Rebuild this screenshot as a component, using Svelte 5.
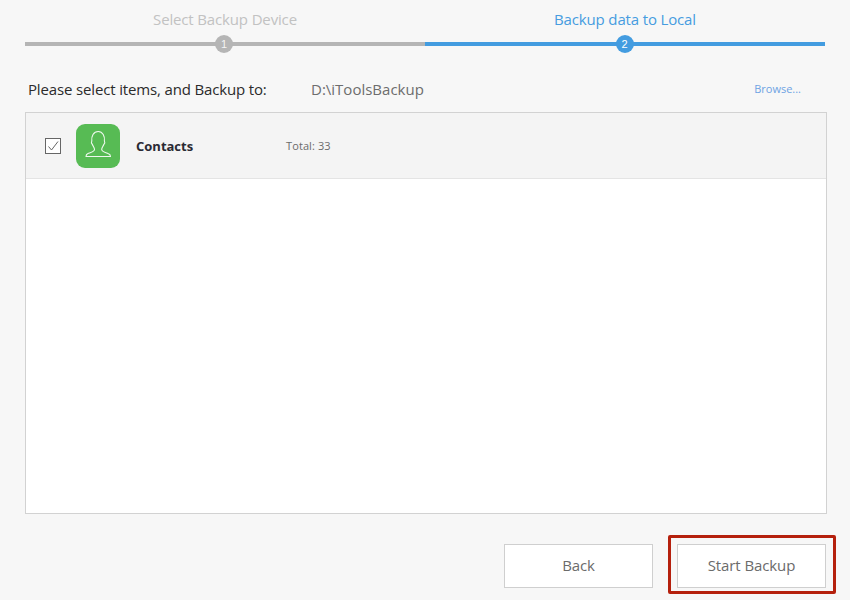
<script>
  const steps = [
    { label: "Select Backup Device", done: false },
    { label: "Backup data to Local", done: true }
  ];
</script>

<div class="page">
  <div class="steps">
    {#each steps as step, i}
      <div class="step" class:active={step.done}>
        <div class="step-label">{step.label}</div>
        <div class="bar"><span class="dot">{i + 1}</span></div>
      </div>
    {/each}
  </div>

  <div class="path-row">
    <span class="path-title">Please select items, and Backup to:</span>
    <span class="path">D:\iToolsBackup</span>
    <span class="browse">Browse...</span>
  </div>

  <div class="list">
    <div class="row">
      <span class="check">
        <svg width="14" height="14" viewBox="0 0 14 14"><path d="M2.5 7.5 L5.5 11 L12 2.5" fill="none" stroke="#666" stroke-width="1"/></svg>
      </span>
      <span class="app-icon">
        <svg width="44" height="44" viewBox="0 0 44 44">
          <path d="M18.5 25.5 C18.5 24 17.2 22.5 16.4 20.5 C15.4 19.5 15.2 18 15.8 17 C15.2 12.5 17.5 7.5 22.2 7.5 C26.8 7.5 29 12.5 28.4 17 C29 18 28.8 19.5 27.8 20.5 C27 22.5 25.7 24 25.7 25.5 C25.7 27.5 29 28.4 32 29.6 C33.8 30.2 34.5 31 34.5 32.5 L10 32.5 C10 31 10.5 30.2 12 29.6 C15 28.4 18.5 27.5 18.5 25.5 Z" fill="none" stroke="#fff" stroke-opacity="0.9" stroke-width="1.1" stroke-linejoin="round"/>
        </svg>
      </span>
      <span class="name">Contacts</span>
      <span class="total">Total: 33</span>
    </div>
  </div>

  <div class="actions">
    <button class="btn">Back</button>
    <div class="marked">
      <button class="btn">Start Backup</button>
      <div class="marker"></div>
    </div>
  </div>
</div>

<style>
  :global(body) {
    background: #f7f7f7;
  }

  .page {
    width: 850px;
    height: 600px;
    box-sizing: border-box;
    padding: 0 23px 0 25px;
    font-family: "Open Sans", "Noto Sans", sans-serif;
    overflow: hidden;
  }

  .steps {
    display: flex;
    width: 800px;
  }

  .step {
    flex: 1;
    color: #c2c2c2;
  }

  .step.active {
    color: #469ce0;
  }

  .step-label {
    height: 42px;
    line-height: 39px;
    font-size: 15px;
    letter-spacing: -0.15px;
    text-align: center;
  }

  .bar {
    height: 4px;
    background: #b5b5b5;
    display: flex;
    justify-content: center;
    align-items: center;
  }

  .active .bar {
    background: #439ce0;
  }

  .dot {
    flex: none;
    width: 18px;
    height: 18px;
    margin-right: 2px;
    border-radius: 50%;
    background: #b5b5b5;
    color: #f4f4f4;
    font-size: 11px;
    line-height: 18px;
    text-align: center;
    font-family: "Liberation Sans", sans-serif;
  }

  .active .dot {
    margin-right: 1px;
    background: #439ce0;
    color: #fff;
  }

  .path-row {
    display: flex;
    align-items: center;
    height: 66px;
    box-sizing: border-box;
    padding: 19px 26px 0 3px;
    font-size: 15px;
    letter-spacing: -0.15px;
    color: #2b2b2b;
  }

  .path-title {
    width: 283px;
  }

  .path {
    color: #6d6d6d;
    flex: 1;
    letter-spacing: 0;
  }

  .browse {
    color: #6ea3e3;
    font-size: 11px;
    letter-spacing: 0;
  }

  .list {
    height: 402px;
    box-sizing: border-box;
    background: #fff;
    border: 1px solid #d2d2d2;
  }

  .row {
    display: flex;
    align-items: center;
    height: 66px;
    box-sizing: border-box;
    padding-left: 19px;
    background: #f4f4f4;
    border-bottom: 1px solid #e4e4e4;
  }

  .check {
    width: 16px;
    height: 16px;
    box-sizing: border-box;
    border: 1px solid #666;
    background: #fff;
    display: flex;
    align-items: center;
    justify-content: center;
    margin-right: 15px;
  }

  .app-icon {
    width: 44px;
    height: 44px;
    border-radius: 9px;
    background: #57bb54;
    margin-right: 16px;
  }

  .app-icon svg {
    display: block;
  }

  .name {
    width: 150px;
    font-size: 13px;
    font-weight: 700;
    color: #2a2a33;
  }

  .total {
    font-size: 11px;
    letter-spacing: 0.1px;
    color: #6b6b6b;
  }

  .actions {
    display: flex;
    justify-content: flex-end;
    gap: 24px;
    margin-top: 30px;
    width: 801px;
  }

  .marked {
    position: relative;
    display: flex;
  }

  .btn {
    width: 149px;
    height: 44px;
    padding: 0 0 2px;
    box-sizing: border-box;
    background: #fff;
    border: 1px solid #cfcfcf;
    font: 15px "Open Sans", "Noto Sans", sans-serif;
    letter-spacing: -0.1px;
    color: #6b6b6b;
  }

  .marker {
    position: absolute;
    top: -9px;
    left: -9px;
    right: -10px;
    bottom: -6px;
    border: 3px solid #b5200d;
    border-radius: 2px;
    pointer-events: none;
  }
</style>
